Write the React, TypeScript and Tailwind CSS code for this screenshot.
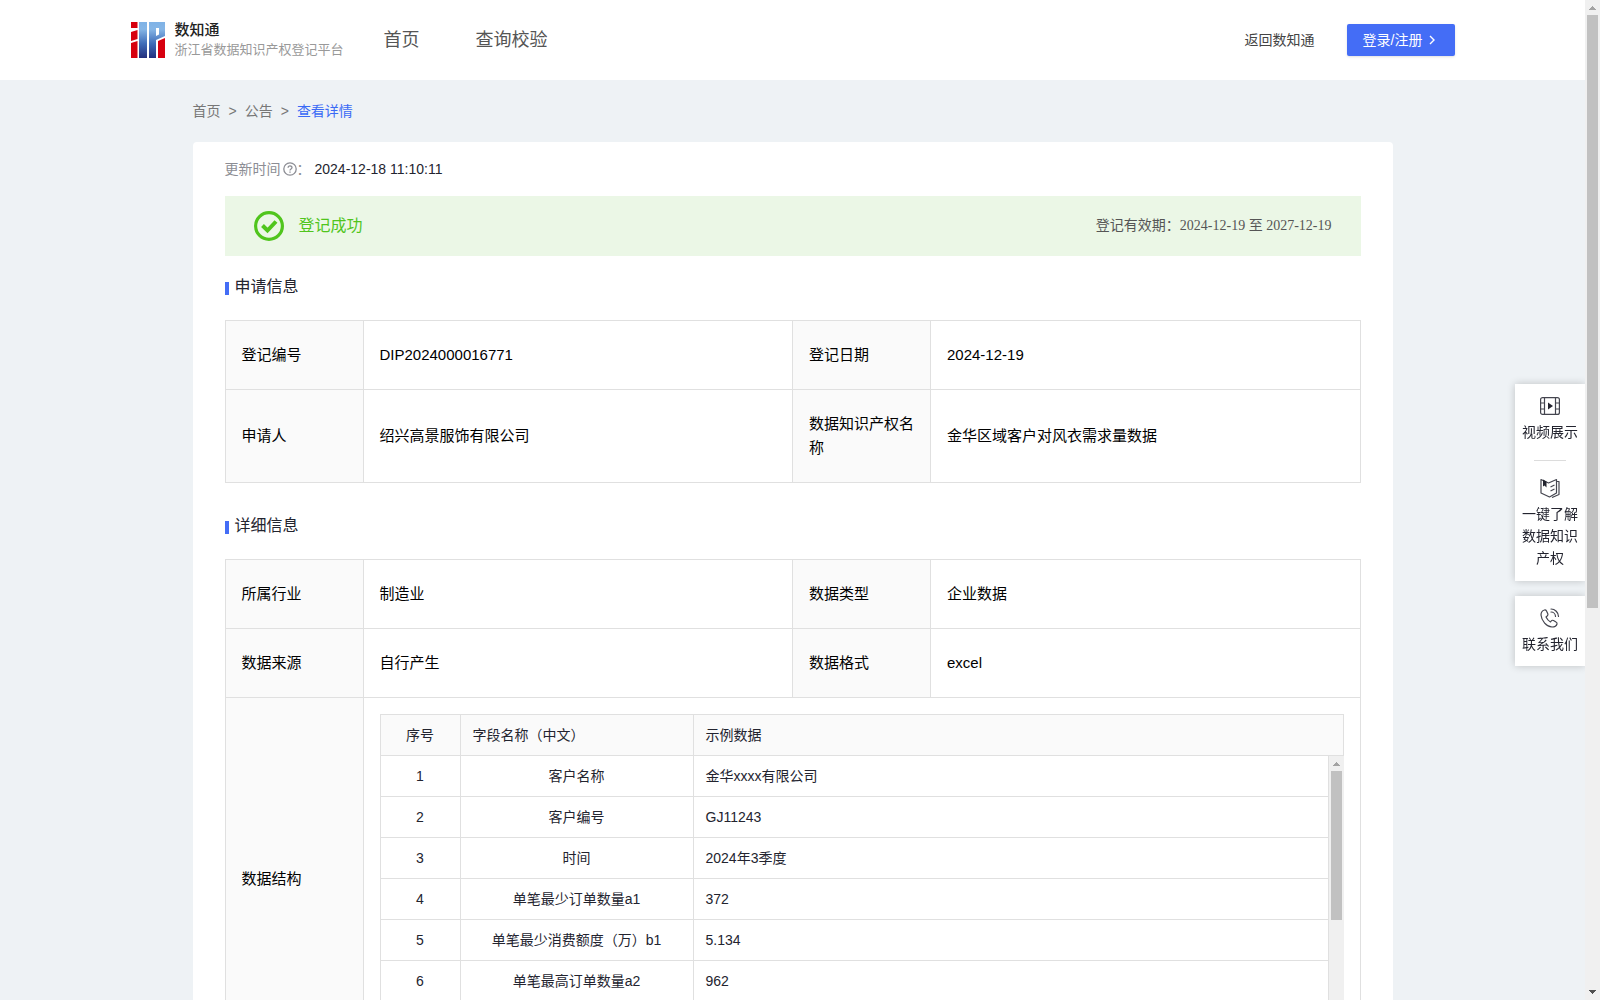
import React from 'react';

function Logo() {
  return (
    <svg width="34" height="36" viewBox="0 0 34 36" aria-hidden="true">
      <defs>
        <linearGradient id="blue" gradientUnits="userSpaceOnUse" x1="0" y1="0" x2="0" y2="36">
          <stop offset="0" stopColor="#7fb2e6" />
          <stop offset="0.2" stopColor="#86b6e6" />
          <stop offset="0.6" stopColor="#3f6cb8" />
          <stop offset="1" stopColor="#232f7d" />
        </linearGradient>
      </defs>
      <path fill="#d7000f" d="M0 0h6.500v6H0zM0 10l6.500-2v9L0 19zM0 21l6.500-2v17H0zM27 19l7-3v20h-7z" />
      <path fill="url(#blue)" d="M8 0h8v36H8zM18 0h16v14l-9 4v18h-7zM25 6v8l3-1.500V6z" fillRule="evenodd" />
    </svg>
  );
}

function UpArrow() {
  return (
    <svg width="15" height="15" viewBox="0 0 15 15" shapeRendering="crispEdges" aria-hidden="true">
      <path fill="#a3a3a3" d="M7 6h1v1h1v1h1v1h1v1H4V9h1V8h1V7h1z" />
    </svg>
  );
}

function DownArrow() {
  return (
    <svg width="15" height="15" viewBox="0 0 15 15" shapeRendering="crispEdges" aria-hidden="true">
      <path fill="#505050" d="M4 5h7v1h-1v1H9v1H8v1H7V8H6V7H5V6H4z" />
    </svg>
  );
}

function Header() {
  return (
    <header className="h-20 bg-white">
      <div className="mx-auto flex h-full max-w-[1324px] items-center">
        <a href="#home" className="flex items-center gap-2.5">
          <Logo />
          <span className="flex flex-col">
            <span className="text-[15px] leading-5 font-medium text-[#222]">数知通</span>
            <span className="text-[13px] leading-5 text-[#999]">浙江省数据知识产权登记平台</span>
          </span>
        </a>
        <nav className="ml-10 flex gap-14 text-lg text-[#555]">
          <a href="#index">首页</a>
          <a href="#query">查询校验</a>
        </nav>
        <a href="#back" className="ml-auto text-sm text-[#444]">返回数知通</a>
        <button className="ml-8 flex h-8 w-[108px] items-center rounded-xs bg-[#446df6] pl-4 text-sm text-white shadow-sm">
          登录/注册
          <svg className="ml-1" width="12" height="12" viewBox="0 0 12 12" fill="none" stroke="currentColor" strokeWidth="1.4" aria-hidden="true">
            <path d="M4 2l4 4-4 4" />
          </svg>
        </button>
      </div>
    </header>
  );
}

function SectionTitle({ children }: { children: React.ReactNode }) {
  return (
    <h2 className="flex h-6 items-center gap-1.5 text-base text-[#23242f]">
      <span className="mt-0.5 h-[13px] w-1 bg-[#446df6]" />
      {children}
    </h2>
  );
}

const label = 'border border-[#e0e0e0] bg-[#fafafa] px-4 py-[22px] text-left font-normal';
const value = 'border border-[#e0e0e0] px-4 py-[22px]';

function InfoTable({ rows, children }: { rows: string[][]; children?: React.ReactNode }) {
  return (
    <table className="w-full table-fixed border-collapse text-[15px] leading-6 text-black">
      <colgroup>
        <col className="w-[138px]" />
        <col />
        <col className="w-[138px]" />
        <col />
      </colgroup>
      <tbody>
        {rows.map((r) => (
          <tr key={r[0]}>
            <th scope="row" className={label}>{r[0]}</th>
            <td className={value}>{r[1]}</td>
            <th scope="row" className={label}>{r[2]}</th>
            <td className={value}>{r[3]}</td>
          </tr>
        ))}
        {children}
      </tbody>
    </table>
  );
}

const fields = [
  ['1', '客户名称', '金华xxxx有限公司'],
  ['2', '客户编号', 'GJ11243'],
  ['3', '时间', '2024年3季度'],
  ['4', '单笔最少订单数量a1', '372'],
  ['5', '单笔最少消费额度（万）b1', '5.134'],
  ['6', '单笔最高订单数量a2', '962'],
];

function FieldColumns() {
  return (
    <colgroup>
      <col className="w-20" />
      <col className="w-[233px]" />
      <col />
    </colgroup>
  );
}

function StructureTable() {
  return (
    <div className="text-sm text-[#23242f]">
      <table className="w-full table-fixed border-collapse">
        <FieldColumns />
        <thead>
          <tr className="h-[41px] bg-[#fafafa]">
            <th className="border border-[#e0e0e0] font-normal">序号</th>
            <th className="border border-[#e0e0e0] px-3 text-left font-normal">字段名称（中文）</th>
            <th className="border border-[#e0e0e0] px-3 text-left font-normal">示例数据</th>
          </tr>
        </thead>
      </table>
      <div className="flex h-[288px] overflow-hidden">
        <div className="min-w-0 flex-1">
          <table className="w-full table-fixed border-collapse">
            <FieldColumns />
            <tbody>
              {fields.map((f) => (
                <tr key={f[0]} className="h-[41px] first:h-10">
                  <td className="border border-t-0 border-[#e0e0e0] text-center">{f[0]}</td>
                  <td className="border border-t-0 border-[#e0e0e0] text-center">{f[1]}</td>
                  <td className="border border-t-0 border-[#e0e0e0] px-3">{f[2]}</td>
                </tr>
              ))}
            </tbody>
          </table>
        </div>
        <div className="flex w-[15px] flex-col items-center bg-[#f0f0f0]" aria-hidden="true">
          <UpArrow />
          <div className="h-[149px] w-[11px] bg-[#c1c1c1]" />
        </div>
      </div>
    </div>
  );
}

function VideoIcon() {
  return (
    <svg width="20" height="20" viewBox="0 0 20 20" fill="none" stroke="#44454f" strokeWidth="1.2" aria-hidden="true">
      <rect x="0.6" y="1.6" width="18.8" height="16.8" rx="2" />
      <path d="M4.500 2v16M15.500 2v16M1 7h3.500M1 13h3.500M15.500 7H19M15.500 13H19" />
      <path d="M8 6.500l5 3.500-5 3.500z" fill="#23242f" stroke="none" />
    </svg>
  );
}

function BookIcon() {
  return (
    <svg width="20" height="20" viewBox="0 0 20 20" fill="none" stroke="#44454f" strokeWidth="1.2" strokeLinejoin="round" aria-hidden="true">
      <path d="M8.500 5L1 1.500v13.500l8.500 4 7-4V1.500z" />
      <path d="M17 3.500h2v13l-7 3M10.500 9l4-2M10.500 13l4-2" />
      <path d="M3 1.500v7l1.500-1 2 2V3.400z" fill="#23242f" stroke="none" />
    </svg>
  );
}

function PhoneIcon() {
  return (
    <svg width="20" height="20" viewBox="0 0 20 20" fill="none" stroke="#44454f" strokeWidth="1.2" strokeLinecap="round" strokeLinejoin="round" aria-hidden="true">
      <path d="M4.500 2C2.500 2.500 1 4.500 1 7c.5 6 5.500 11.500 11 12 2.500 0 4.500-1 5-3 .3-1-.2-1.600-1-2l-2.500-1.500c-1-.5-1.700-.3-2.300.5l-.7 1C8.500 13 7 11 6 9l1.200-1c.8-.6 1-1.300.6-2.200L6.500 3c-.4-.8-1-1.200-2-1z" />
      <path d="M11 1c4 0 7.500 3.500 7.500 7.500M11 4c2.500 0 4.500 2 4.500 4.500" />
    </svg>
  );
}

function SideTools() {
  const panel = 'flex flex-col items-center bg-white text-center text-sm leading-[22px] text-[#23242f] shadow-[0_0_8px_rgba(0,0,0,0.2)]';
  return (
    <aside className="absolute top-96 right-0 flex w-[70px] flex-col gap-[15px]">
      <div className={panel}>
        <a href="#video" className="flex flex-col items-center gap-[5px] pt-3 pb-[17px]">
          <VideoIcon />
          视频展示
        </a>
        <hr className="w-8 border-t border-[#dcdcdc]" />
        <a href="#guide" className="flex flex-col items-center gap-[5px] px-[7px] pt-[17px] pb-3">
          <BookIcon />
          一键了解数据知识产权
        </a>
      </div>
      <div className={panel}>
        <a href="#contact" className="flex flex-col items-center gap-[5px] pt-3 pb-[11px]">
          <PhoneIcon />
          联系我们
        </a>
      </div>
    </aside>
  );
}

export default function App() {
  return (
    <div className="flex h-screen font-['Liberation_Sans','Noto_Sans_CJK_SC',sans-serif]">
      <div className="relative min-w-0 flex-1 overflow-hidden">
        <div className="h-full overflow-y-auto bg-[#eef2f5] [scrollbar-width:none]">
          <Header />
          <main className="mx-auto max-w-[1200px]">
            <nav aria-label="breadcrumb" className="flex h-[62px] items-center gap-2 text-sm text-[#777]">
              <a href="#index">首页</a>
              <span>&gt;</span>
              <a href="#notice">公告</a>
              <span>&gt;</span>
              <a href="#detail" className="text-[#3a6af5]">查看详情</a>
            </nav>
            <div className="rounded-sm bg-white px-8 pb-8">
              <div className="flex h-[54px] items-center text-sm text-[#23242f]">
                <span className="flex items-center text-[#8c8d94]">
                  更新时间
                  <svg className="ml-0.5" width="14" height="14" viewBox="0 0 14 14" fill="none" stroke="currentColor" strokeWidth="1.3" aria-hidden="true">
                    <circle cx="7" cy="7" r="6.200" />
                    <path d="M5.100 5.800c0-2.400 3.900-2.400 3.900-.2C9 7 7 7 7 8.500M7 9.600v1.200" />
                  </svg>
                  ：
                </span>
                <span className="ml-1">2024-12-18 11:10:11</span>
              </div>
              <div className="flex h-[60px] items-center bg-[#ebf7e6] px-[29px]">
                <svg width="30" height="30" viewBox="0 0 30 30" fill="none" stroke="#50c51d" aria-hidden="true">
                  <circle cx="15" cy="15" r="13.400" strokeWidth="3.200" />
                  <path d="M8.500 14.500l5 5L22 10.500" strokeWidth="4" />
                </svg>
                <span className="ml-[15px] text-base text-[#50c51d]">登记成功</span>
                <span className="ml-auto font-['Liberation_Serif','Noto_Sans_CJK_SC',serif] text-sm text-[#555]">
                  登记有效期：2024-12-19 至 2027-12-19
                </span>
              </div>
              <div className="flex flex-col gap-[21px] pt-[19px]">
                <SectionTitle>申请信息</SectionTitle>
                <InfoTable
                  rows={[
                    ['登记编号', 'DIP2024000016771', '登记日期', '2024-12-19'],
                    ['申请人', '绍兴高景服饰有限公司', '数据知识产权名称', '金华区域客户对风衣需求量数据'],
                  ]}
                />
              </div>
              <div className="flex flex-col gap-[21px] pt-[31px]">
                <SectionTitle>详细信息</SectionTitle>
                <InfoTable
                  rows={[
                    ['所属行业', '制造业', '数据类型', '企业数据'],
                    ['数据来源', '自行产生', '数据格式', 'excel'],
                  ]}
                >
                  <tr>
                    <th scope="row" className={label}>数据结构</th>
                    <td colSpan={3} className="border border-[#e0e0e0] p-4">
                      <StructureTable />
                    </td>
                  </tr>
                </InfoTable>
              </div>
            </div>
          </main>
        </div>
        <SideTools />
      </div>
      <div className="flex w-[15px] flex-col items-center bg-[#f0f0f0]" aria-hidden="true">
        <UpArrow />
        <div className="h-[593px] w-[11px] bg-[#c1c1c1]" />
        <div className="mt-auto flex">
          <DownArrow />
        </div>
      </div>
    </div>
  );
}
